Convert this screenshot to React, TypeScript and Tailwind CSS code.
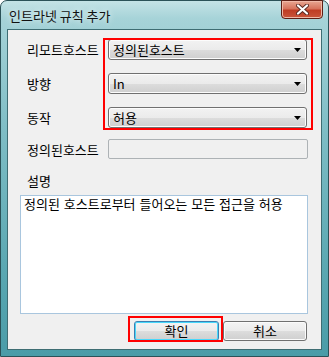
import React from "react";

const font = { fontFamily: '"Noto Sans CJK KR", "Noto Sans", sans-serif' };

const Combo = ({ value }: { value: string }) => (
  <div className="relative flex items-center h-[21px] w-[199px] rounded-[3px] border border-[#707070] bg-[linear-gradient(to_bottom,#f2f2f2_0%,#ebebeb_50%,#dddddd_51%,#cfcfcf_100%)] pl-[4px] text-[13px] leading-none text-black shadow-[inset_0_0_0_1px_#fcfcfc]">
    <span>{value}</span>
    <svg className="absolute right-[4px] top-[8px]" width="8" height="4" viewBox="0 0 8 4">
      <polygon points="0,0 7,0 3.5,4" fill="#000" />
    </svg>
  </div>
);

const Btn = ({ label, focused }: { label: string; focused?: boolean }) => (
  <div
    className={`flex items-center justify-center h-[20px] pb-[1px] rounded-[3px] border text-[13px] leading-none text-black bg-[linear-gradient(to_bottom,#f4f4f4_0%,#ebebeb_50%,#dddddd_51%,#cfcfcf_100%)] ${
      focused
        ? "w-[85px] border-[#3c7fb1] shadow-[inset_0_0_0_1px_#48d8fb]"
        : "w-[84px] border-[#707070] shadow-[inset_0_0_0_1px_#fbfbfb]"
    }`}
  >
    {label}
  </div>
);

export default function App() {
  return (
    <div className="w-[329px] h-[357px] bg-white" style={font}>
      <div className="relative w-[329px] h-[357px] rounded-t-[7px] border border-[#2b5258] bg-[linear-gradient(to_bottom,#c4e3e6_0%,#a6d3d8_5%,#80bec6_35%,#5ba8b2_75%,#4a9ca8_100%)]">
        {/* title bar */}
        <div className="h-[28px] flex items-center pl-[8px] text-[13px] leading-none text-[#111] [text-shadow:0_0_6px_#ffffff]">
          인트라넷 규칙 추가
        </div>
        <div className="absolute top-[-1px] right-[5px] w-[42px] h-[19px] flex items-center justify-center rounded-b-[4px] border border-[#5e1f15] bg-[linear-gradient(to_bottom,#e9a792_0%,#d7735c_45%,#bf3d24_55%,#c9553a_100%)] shadow-[inset_0_0_0_1px_#f0b9a8]">
          <svg width="13" height="11" viewBox="0 0 13 11">
            <path d="M2 1.5 L11 9.5 M11 1.5 L2 9.5" stroke="#5a2a22" strokeWidth="4" strokeLinecap="round" />
            <path d="M2 1.5 L11 9.5 M11 1.5 L2 9.5" stroke="#ffffff" strokeWidth="2.2" strokeLinecap="round" />
          </svg>
        </div>

        {/* client area */}
        <div className="ml-[6px] w-[315px] h-[321px] border border-[#3e6d73] bg-[#f0f0f0] text-[13px] leading-none text-black">
          <div className="pt-[9px] pl-[19px] grid grid-cols-[81px_199px] gap-y-[13px] items-center">
            <span>리모트호스트</span>
            <Combo value="정의된호스트" />
            <span>방향</span>
            <Combo value="In" />
            <span>동작</span>
            <Combo value="허용" />
            <span className="mt-[-2px]">정의된호스트</span>
            <div className="mt-[-2px] h-[20px] w-[200px] rounded-[2px] border border-[#adb2b5] bg-[#f0f0f0]" />
          </div>
          <div className="pl-[19px] mt-[15px]">설명</div>
          <div className="ml-[12px] mt-[8px] h-[119px] w-[288px] border border-[#a9c6de] bg-white pl-[3px] pt-[1px] [word-spacing:1px]">
            정의된 호스트로부터 들어오는 모든 접근을 허용
          </div>
          <div className="flex justify-end gap-[4px] pr-[14px] mt-[7px]">
            <Btn label="확인" focused />
            <Btn label="취소" />
          </div>
        </div>

        {/* annotation boxes */}
        <div className="absolute left-[102px] top-[37px] w-[210px] h-[92px] border-2 border-[#ff0000]" />
        <div className="absolute left-[127px] top-[315px] w-[95px] h-[26px] border-2 border-[#ff0000]" />
      </div>
    </div>
  );
}
